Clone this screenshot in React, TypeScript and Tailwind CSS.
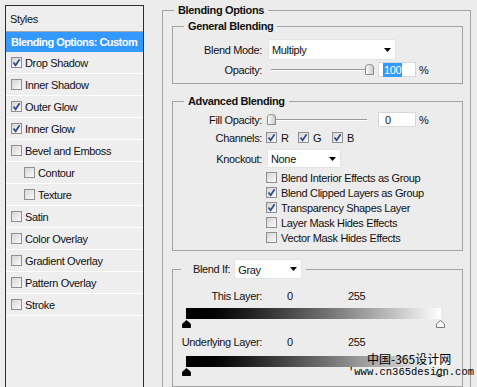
import React from "react";

const font = "font-['Liberation_Sans',Arial,sans-serif]";

function Box({ on }: { on?: boolean }) {
  return (
    <span className="w-[11px] h-[11px] shrink-0 border border-[#8f8f8f] bg-linear-to-br from-[#d6d6d6] to-[#fafafa] flex items-center justify-center">
      {on && (
        <svg width="9" height="9" viewBox="0 0 9 9">
          <path d="M1.5 4.5 L3.6 7.2 L7.6 1.2" stroke="#2a4a8c" strokeWidth="1.7" fill="none" />
        </svg>
      )}
    </span>
  );
}

function Arrow() {
  return (
    <svg width="7" height="4" viewBox="0 0 7 4">
      <path d="M0 0 H7 L3.5 4 Z" fill="#000" />
    </svg>
  );
}

function Select({ value, w, h }: { value: string; w: string; h: string }) {
  return (
    <div className={`${w} ${h} bg-white flex items-center justify-between pl-[3px] pr-[4px] border border-[#e4e4e4]`}>
      <span className="pt-[1px]">{value}</span>
      <Arrow />
    </div>
  );
}

function Thumb() {
  return (
    <svg width="9" height="11" viewBox="0 0 9 11">
      <defs>
        <linearGradient id="th" x1="0" y1="0" x2="1" y2="0">
          <stop offset="0" stopColor="#ffffff" />
          <stop offset="1" stopColor="#c8c8c8" />
        </linearGradient>
      </defs>
      <path d="M0.5 10.5 V3 Q0.5 0.5 4.5 0.5 Q8.5 0.5 8.5 3 V10.5 Z" fill="url(#th)" stroke="#8a8a8a" />
    </svg>
  );
}

function Slider({ at }: { at: "start" | "end" }) {
  return (
    <div className="relative w-[106px] h-[15px] ml-[6px]">
      <div className="absolute left-[3px] right-[7px] top-[7px] h-[2px] border-t border-[#9a9a9a] border-b border-b-white" />
      <div className={`absolute top-[2px] ${at === "end" ? "left-[97px]" : "left-[-1px]"}`}>
        <Thumb />
      </div>
    </div>
  );
}

function Row({ label, children, className = "" }: { label: string; children?: React.ReactNode; className?: string }) {
  return (
    <div className={`flex items-center ${className}`}>
      <span className="w-[89px] shrink-0 text-right">{label}</span>
      {children}
    </div>
  );
}

function Pin({ dark }: { dark?: boolean }) {
  return (
    <svg width="9" height="8" viewBox="0 0 9 8">
      <path d="M0.5 7.5 V4 L4.5 0.5 L8.5 4 V7.5 Z" fill={dark ? "#000" : "#fff"} stroke={dark ? "#000" : "#777"} />
    </svg>
  );
}

function Gradient() {
  return (
    <>
      <div className="ml-[13px] w-[255px] h-[11px] bg-linear-to-r from-black to-white" />
      <div className="ml-[9px] w-[263px] h-[8px] mt-[1px] flex justify-between">
        <Pin dark />
        <Pin />
      </div>
    </>
  );
}

const styles: { name: string; on?: boolean; indent?: boolean }[] = [
  { name: "Drop Shadow", on: true },
  { name: "Inner Shadow" },
  { name: "Outer Glow", on: true },
  { name: "Inner Glow", on: true },
  { name: "Bevel and Emboss" },
  { name: "Contour", indent: true },
  { name: "Texture", indent: true },
  { name: "Satin" },
  { name: "Color Overlay" },
  { name: "Gradient Overlay" },
  { name: "Pattern Overlay" },
  { name: "Stroke" },
];

const extras: { name: string; on?: boolean }[] = [
  { name: "Blend Interior Effects as Group" },
  { name: "Blend Clipped Layers as Group", on: true },
  { name: "Transparency Shapes Layer", on: true },
  { name: "Layer Mask Hides Effects" },
  { name: "Vector Mask Hides Effects" },
];

export default function App() {
  return (
    <div className={`relative w-[477px] h-[387px] overflow-hidden bg-[#ececec] text-[11px] leading-[14px] tracking-[-0.35px] whitespace-nowrap text-[#111] flex items-start ${font}`}>
      {/* Styles list */}
      <div className="ml-[5px] mt-[5px] w-[139px] h-[400px] shrink-0 border border-[#2e2e2e] bg-[#eeeeee]">
        <div className="h-[26px] flex items-center pl-[4px] pt-[1px] border-b border-[#a8a8a8]">Styles</div>
        <div className="h-[20px] bg-[#3399ff] text-white font-bold tracking-[-0.55px] flex items-center pl-[5px]">
          Blending Options: Custom
        </div>
        {styles.map((s) => (
          <div
            key={s.name}
            className={`h-[22px] border-b border-white flex items-center gap-[3px] ${s.indent ? "pl-[18px]" : "pl-[5px]"}`}
          >
            <Box on={s.on} />
            <span>{s.name}</span>
          </div>
        ))}
      </div>

      {/* Blending options */}
      <fieldset className="ml-[18px] mt-[3px] w-[309px] h-[420px] shrink-0 border border-[#a3a3a3] pl-[9px] pr-[7px]">
        <legend className="ml-[2px] px-[4px] font-bold">Blending Options</legend>

        <fieldset className="mt-[2px] border border-[#a3a3a3] pb-[6px]">
          <legend className="ml-[11px] px-[4px] font-bold">General Blending</legend>
          <Row label="Blend Mode:" className="mt-[6px]">
            <div className="ml-[6px]">
              <Select value="Multiply" w="w-[128px]" h="h-[21px]" />
            </div>
          </Row>
          <Row label="Opacity:" className="mt-[2px]">
            <Slider at="end" />
            <div className="ml-[4px] w-[38px] h-[15px] bg-white border border-[#d8d8d8] flex items-center pl-[4px]">
              <span className="bg-[#3399ff] text-white px-[1px]">100</span>
            </div>
            <span className="ml-[3px]">%</span>
          </Row>
        </fieldset>

        <fieldset className="mt-[10px] border border-[#a3a3a3] pb-[5px]">
          <legend className="ml-[11px] px-[4px] font-bold">Advanced Blending</legend>
          <Row label="Fill Opacity:" className="mt-[4px]">
            <Slider at="start" />
            <div className="ml-[4px] w-[38px] h-[15px] bg-white border border-[#d8d8d8] flex items-center pl-[6px]">
              0
            </div>
            <span className="ml-[3px]">%</span>
          </Row>
          <Row label="Channels:" className="mt-[4px] h-[13px]">
            <div className="ml-[4px] w-[32px] flex items-center gap-[4px]">
              <Box on />
              <span>R</span>
            </div>
            <div className="w-[34px] flex items-center gap-[4px]">
              <Box on />
              <span>G</span>
            </div>
            <div className="flex items-center gap-[4px]">
              <Box on />
              <span>B</span>
            </div>
          </Row>
          <Row label="Knockout:" className="mt-[5px]">
            <div className="ml-[5px]">
              <Select value="None" w="w-[74px]" h="h-[19px]" />
            </div>
          </Row>
          <div className="mt-[2px] pl-[93px]">
            {extras.map((e) => (
              <div key={e.name} className="h-[15px] flex items-center gap-[4px]">
                <Box on={e.on} />
                <span>{e.name}</span>
              </div>
            ))}
          </div>
        </fieldset>

        <fieldset className="mt-[8px] border border-[#a3a3a3] pb-[10px]">
          <legend className="ml-[8px] pl-[12px] pr-[4px] flex items-center">
            <span>Blend If:</span>
            <div className="ml-[4px]">
              <Select value="Gray" w="w-[68px]" h="h-[20px]" />
            </div>
          </legend>
          <Row label="This Layer:" className="mt-[10px]">
            <span className="w-[86px] pl-[25px]">0</span>
            <span>255</span>
          </Row>
          <div className="mt-[5px]">
            <Gradient />
          </div>
          <Row label="Underlying Layer:" className="mt-[7px]">
            <span className="w-[86px] pl-[25px]">0</span>
            <span>255</span>
          </Row>
          <div className="mt-[7px]">
            <Gradient />
          </div>
        </fieldset>
      </fieldset>

      {/* watermark */}
      <div className="absolute left-[367px] top-[351px] text-[12px] leading-[15px] tracking-normal text-black font-['Noto_Sans_CJK_SC',sans-serif]">
        中国-365设计网
      </div>
      <div className="absolute left-[348px] top-[366px] text-[10.5px] leading-[13px] tracking-normal text-black font-['Liberation_Mono',monospace]">
        'www.cn365design.com
      </div>
    </div>
  );
}
